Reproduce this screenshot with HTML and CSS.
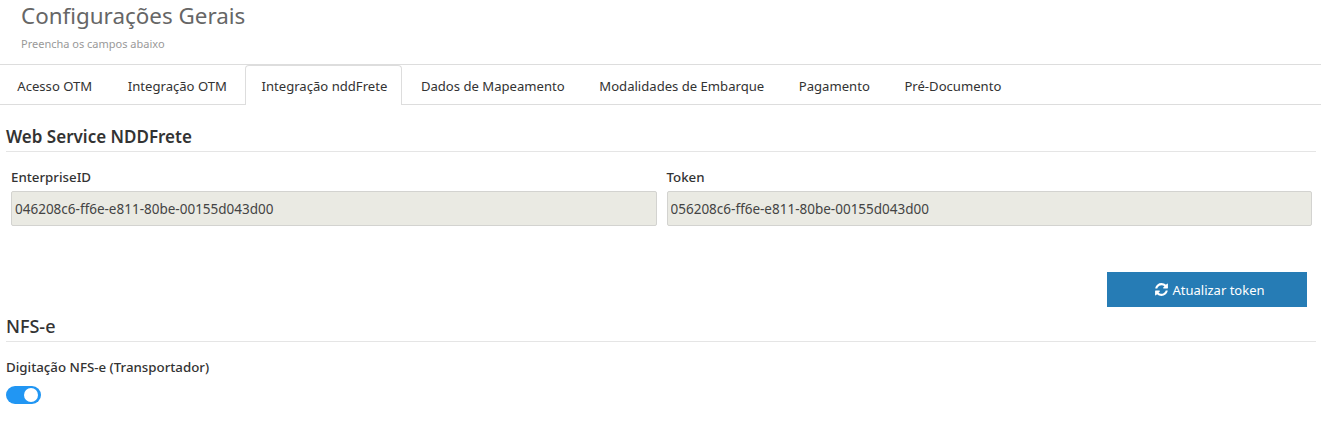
FILE: index.html
```html
<!DOCTYPE html>
<html lang="pt-BR">
<head>
    <meta charset="UTF-8">
    <meta name="viewport" content="width=device-width, initial-scale=1.0">
    <title>Configurações Gerais</title>
    <link rel="stylesheet" href="styles.css">
</head>
<body>
    <header class="page-header">
        <h1>Configurações Gerais</h1>
        <p>Preencha os campos abaixo</p>
    </header>
    <nav class="tabs">
        <a class="tab">Acesso OTM</a>
        <a class="tab">Integração OTM</a>
        <a class="tab active">Integração nddFrete</a>
        <a class="tab">Dados de Mapeamento</a>
        <a class="tab">Modalidades de Embarque</a>
        <a class="tab">Pagamento</a>
        <a class="tab">Pré-Documento</a>
    </nav>
    <main class="content">
        <h2 class="section-title">Web Service NDDFrete</h2>
        <div class="fields">
            <div class="field">
                <label>EnterpriseID</label>
                <input type="text" value="046208c6-ff6e-e811-80be-00155d043d00" disabled>
            </div>
            <div class="field">
                <label>Token</label>
                <input type="text" value="056208c6-ff6e-e811-80be-00155d043d00" disabled>
            </div>
        </div>
        <div class="actions">
            <button class="btn-primary">
                <svg class="icon" viewBox="0 0 1792 1792"><path fill="currentColor" d="M1639 1056q0 5-1 7-64 268-268 434.5t-478 166.5q-146 0-282.5-55t-243.5-157l-129 129q-19 19-45 19t-45-19-19-45v-448q0-26 19-45t45-19h448q26 0 45 19t19 45-19 45l-137 137q71 66 161 102t187 36q134 0 250-65t186-179q11-17 53-117 8-23 30-23h192q13 0 22.5 9.5t9.5 22.5zm25-800v448q0 26-19 45t-45 19h-448q-26 0-45-19t-19-45 19-45l138-138q-148-137-349-137-134 0-250 65t-186 179q-11 17-53 117-8 23-30 23h-199q-13 0-22.5-9.5t-9.5-22.5v-7q65-268 270-434.5t480-166.5q146 0 284 55.5t245 156.5l130-129q19-19 45-19t45 19 19 45z"/></svg>
                Atualizar token
            </button>
        </div>
        <h2 class="section-title nfse">NFS-e</h2>
        <div class="switch-field">
            <label>Digitação NFS-e (Transportador)</label>
            <span class="switch"><span class="knob"></span></span>
        </div>
    </main>
</body>
</html>
```

FILE: styles.css
```css
body {
    margin: 0;
    font-family: "Noto Sans", "Open Sans", sans-serif;
    font-size: 13px;
    color: #333;
    background-color: #fff;
}

.page-header {
    height: 65px;
    padding-left: 21px;
    box-sizing: border-box;
    border-bottom: 1px solid #ddd;
}

.page-header h1 {
    margin: 0;
    padding-top: 2px;
    font-size: 22.4px;
    line-height: 28px;
    font-weight: 400;
    color: #666;
}

.page-header p {
    margin: 7px 0 0;
    font-size: 11px;
    line-height: 14px;
    color: #999;
}

.tabs {
    display: flex;
    height: 40px;
    box-sizing: border-box;
    border-bottom: 1px solid #ddd;
}

.tab {
    height: 39px;
    padding: 0 16.3px;
    box-sizing: border-box;
    font-size: 13.1px;
    line-height: 41px;
    border: 1px solid transparent;
    border-bottom: 0;
    color: #333;
}

.tab:first-child {
    padding-right: 17.3px;
}

.tab.active {
    height: 40px;
    margin: 0 2px 0 1px;
    padding: 0 13.3px 0 15.3px;
    background-color: #fff;
    border-color: #ddd;
    border-radius: 4px 4px 0 0;
}

.content {
    padding: 0 5px 0 6px;
}

.section-title {
    margin: 0;
    padding-top: 19px;
    height: 47px;
    box-sizing: border-box;
    font-size: 17px;
    line-height: 26px;
    font-weight: 600;
    color: #333;
    border-bottom: 1px solid #e5e5e5;
}

.section-title.nfse {
    height: 35px;
    padding-top: 6px;
    font-size: 18px;
    font-weight: 500;
}

.fields {
    display: grid;
    grid-template-columns: 1fr 1fr;
    gap: 10px;
    padding: 15px 4px 0 5px;
}

.field label,
.switch-field label {
    display: block;
    font-size: 13.3px;
    font-weight: 500;
    line-height: 20px;
}

.field input {
    display: block;
    width: 100%;
    height: 35px;
    margin-top: 4px;
    padding: 0 3px;
    box-sizing: border-box;
    font: inherit;
    font-size: 13.5px;
    color: #444;
    background-color: #eaeae3;
    border: 1px solid #d3d3d0;
    border-radius: 2px;
    opacity: 1;
}

.actions {
    display: flex;
    justify-content: flex-end;
    padding: 46px 9px 0 0;
}

.btn-primary {
    display: flex;
    align-items: center;
    justify-content: center;
    gap: 3px;
    width: 200px;
    height: 35px;
    padding: 0 0 0 5px;
    font: inherit;
    color: #fff;
    background-color: #267cb5;
    border: none;
}

.icon {
    width: 15px;
    height: 15px;
}

.switch-field {
    padding-top: 15px;
}

.switch {
    display: block;
    position: relative;
    width: 35px;
    height: 18px;
    margin-top: 9px;
    background-color: #2196f3;
    border-radius: 9px;
}

.knob {
    position: absolute;
    top: 2px;
    right: 3px;
    width: 14px;
    height: 14px;
    background-color: #fff;
    border-radius: 50%;
}
```
